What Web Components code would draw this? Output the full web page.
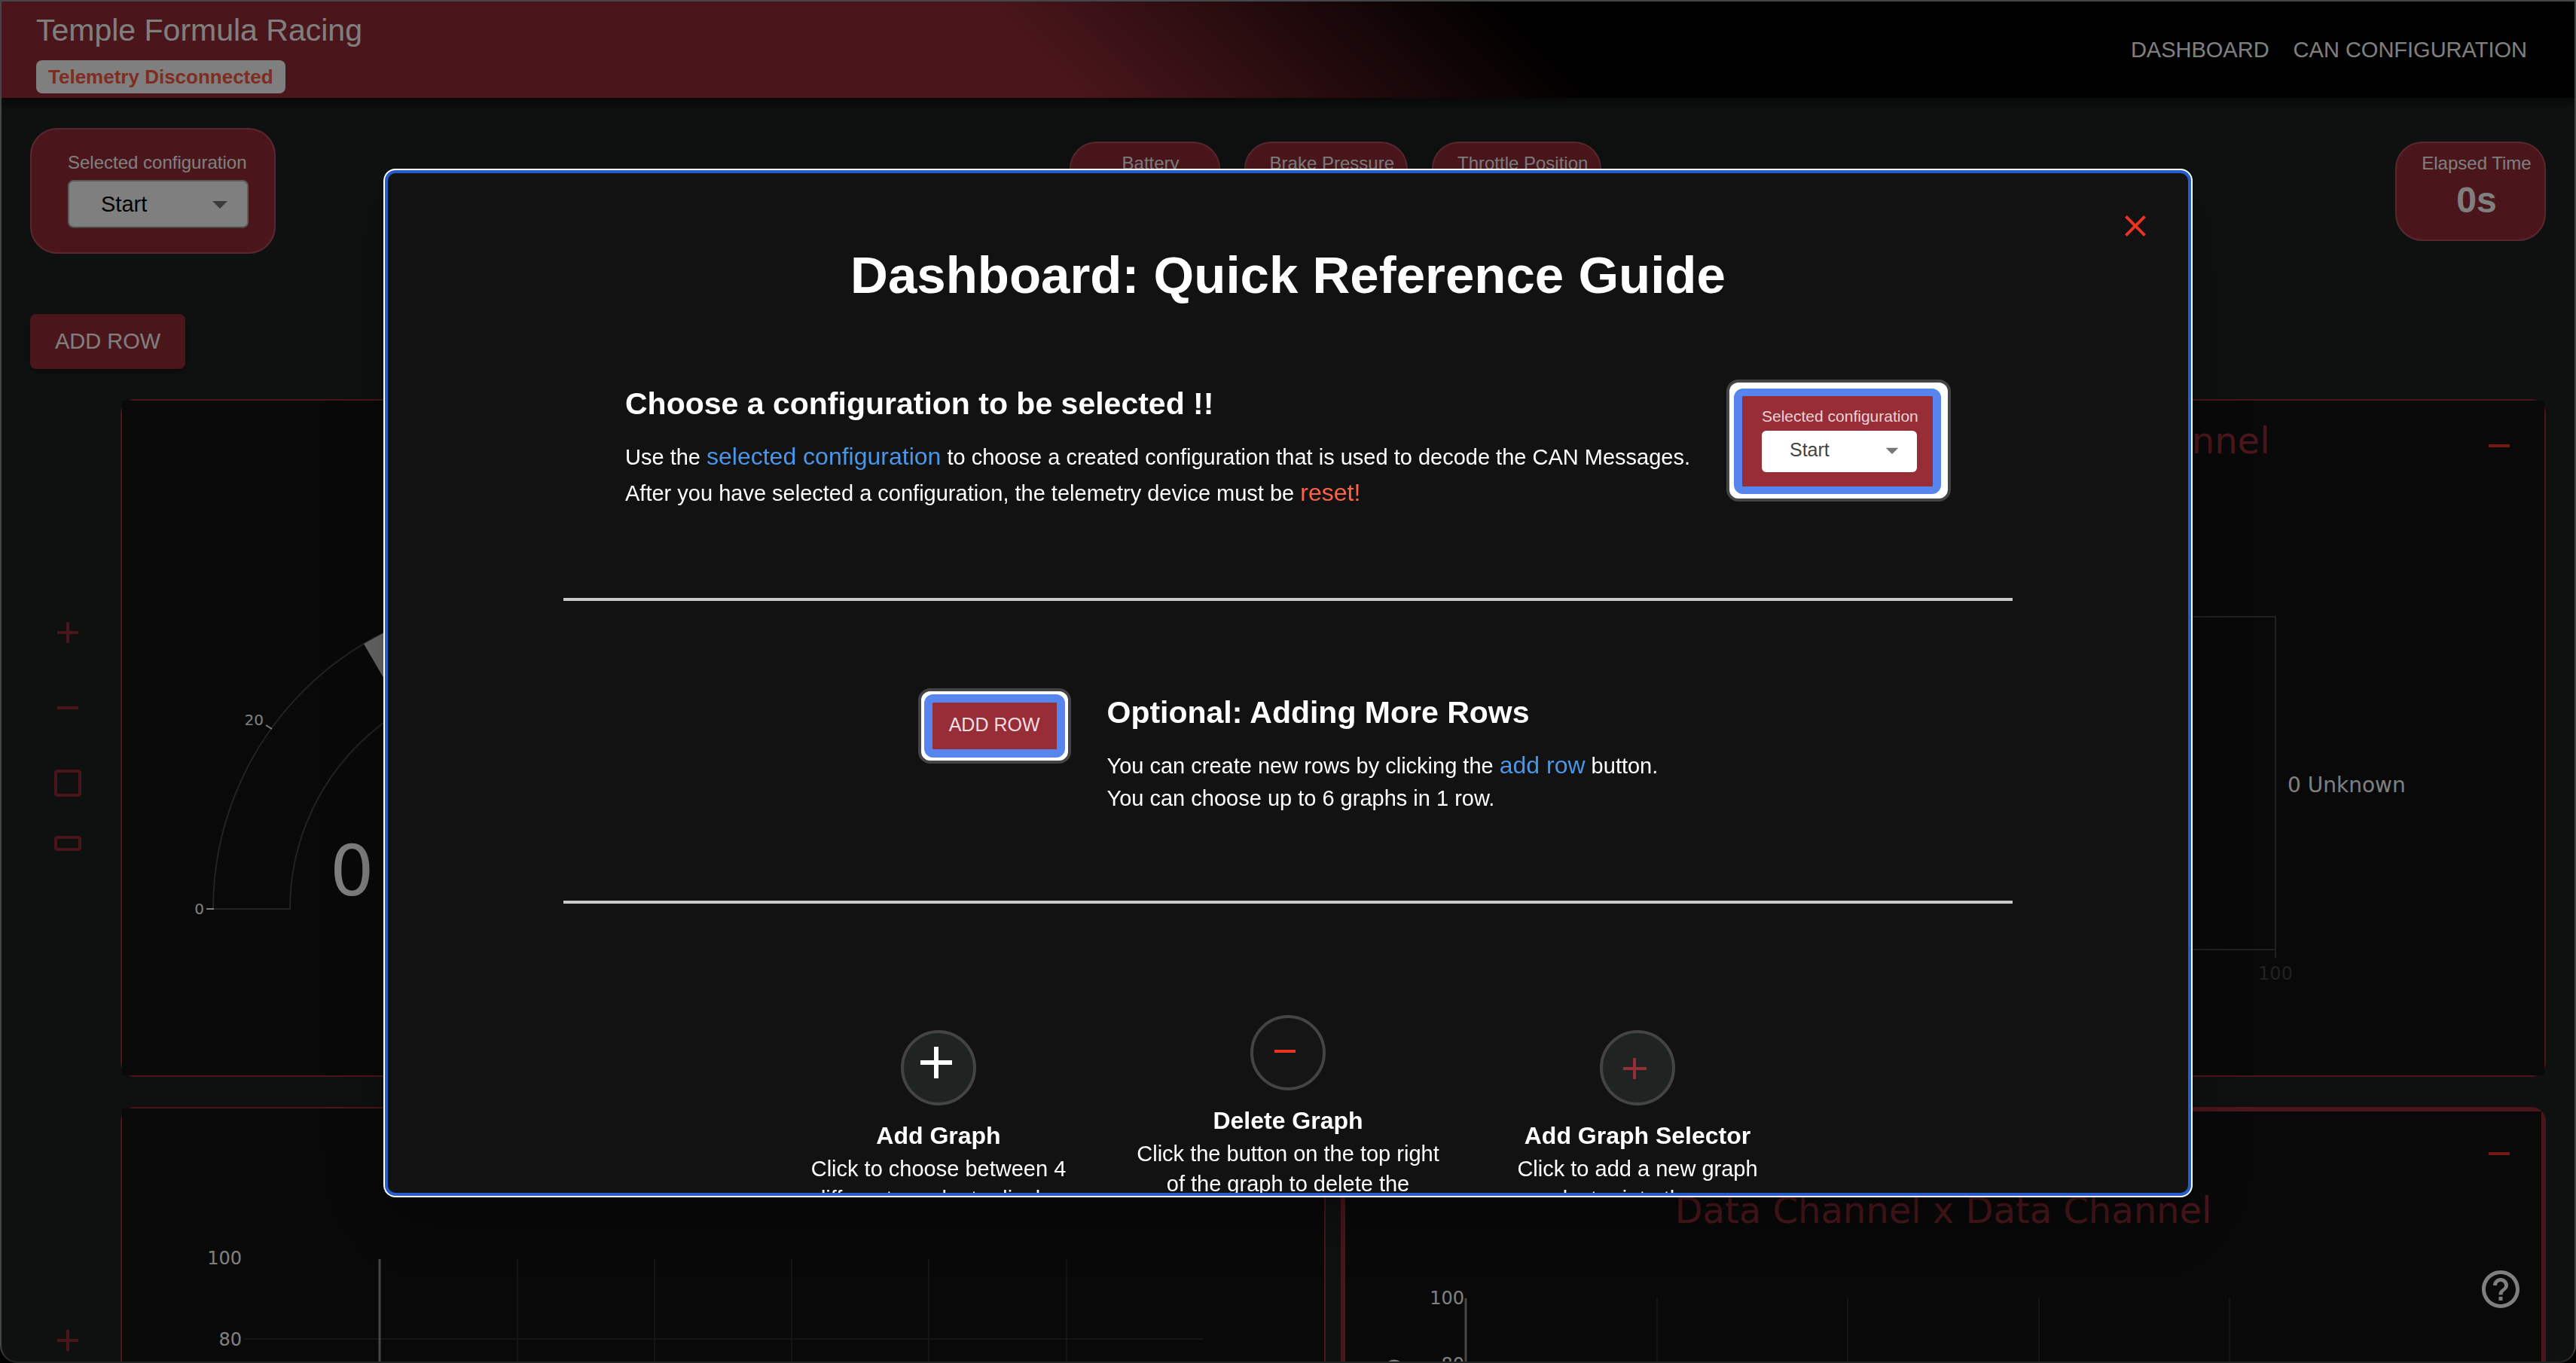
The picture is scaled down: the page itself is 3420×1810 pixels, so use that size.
<!DOCTYPE html>
<html lang="en">
<head>
<meta charset="utf-8">
<title>Temple Formula Racing</title>
<style>
  :root {
    --page: #1e2221;
    --brand: #962d37;
    --card: #121212;
    --danger: #ea3323;
    --accent: #4a96e8;
  }
  * { box-sizing: border-box; }
  html, body { margin: 0; height: 100%; overflow: hidden; background: #000; }
  body { font-family: "Liberation Sans", Arial, sans-serif; font-size: 29px; color: #fff; }
</style>
</head>
<body>
<tfr-app></tfr-app>

<script>
const define = (name, html) => {
  const template = document.createElement('template');
  template.innerHTML = '<style>*{box-sizing:border-box}</style>' + html;
  customElements.define(name, class extends HTMLElement {
    constructor() {
      super();
      this.attachShadow({ mode: 'open' }).append(template.content.cloneNode(true));
    }
  });
};

/* Application bar */
define('tfr-header', `
<style>
  :host { display: block; position: relative; z-index: 1; }
  header {
    display: flex; justify-content: space-between; align-items: center;
    min-height: 128px; padding: 6px 63px 6px 46px;
    background: linear-gradient(45deg, var(--brand) 40%, #000 60%);
    box-shadow: 0 4px 8px -2px rgba(0,0,0,.3), 0 8px 10px rgba(0,0,0,.25), 0 2px 20px rgba(0,0,0,.2);
  }
  .brand { display: flex; flex-direction: column; align-items: flex-start; gap: 8px; }
  h1 { margin: 0; font-size: 41px; line-height: 64px; font-weight: 400; }
  .status { padding: 0 16px; border-radius: 8px; background: #fff; color: #ff5a45; font-size: 26px; line-height: 44px; font-weight: 700; }
  nav { display: flex; gap: 32px; }
  a { color: #fff; text-decoration: none; font-size: 29px; line-height: 48px; }
</style>
<header>
  <div class="brand">
    <h1>Temple Formula Racing</h1>
    <div class="status">Telemetry Disconnected</div>
  </div>
  <nav><a href="#dashboard">DASHBOARD</a><a href="#can">CAN CONFIGURATION</a></nav>
</header>`);

/* Rounded red read-out card */
define('tfr-stat', `
<style>
  :host {
    display: flex; flex-direction: column; align-items: center; min-width: 200px;
    padding: 9px 16px 20px 32px; border: 2px solid #b2505f; border-radius: 36px; background: var(--brand);
  }
  .label { font-size: 24px; line-height: 35px; white-space: nowrap; }
  .value { font-size: 48px; line-height: 64px; font-weight: 700; }
</style>
<div class="label"><slot></slot></div>
<div class="value"><slot name="value"></slot></div>`);

define('tfr-config', `
<style>
  :host {
    display: block; padding: 26px 34px 32px 48px; border: 2px solid #b2505f; border-radius: 36px; background: var(--brand);
  }
  label { display: block; font-size: 24px; line-height: 35px; margin-bottom: 6px; white-space: nowrap; }
  .field { display: grid; align-items: center; width: 240px; }
  select, svg { grid-area: 1 / 1; }
  select {
    appearance: none; width: 100%; height: 64px; padding: 0 42px; border: 2px solid #b8b8b8; border-bottom-color: #999;
    border-radius: 8px; background: #fff; color: #000; font: 29px "Liberation Sans", Arial, sans-serif;
  }
  svg { justify-self: end; width: 48px; height: 48px; margin-right: 14px; pointer-events: none; fill: #757575; }
</style>
<label for="config">Selected configuration</label>
<div class="field">
  <select id="config"><option>Start</option></select>
  <svg viewBox="0 0 24 24"><path d="M7 10l5 5 5-5z"/></svg>
</div>`);

/* Row of graphs with its tool column */
define('tfr-row', `
<style>
  :host { display: flex; gap: 20px; min-height: 900px; }
  .tools { display: flex; flex-direction: column; justify-content: center; align-items: center; gap: 20px; width: 100px; flex: none; }
  .pair { display: flex; flex-direction: column; }
  button { display: grid; place-items: center; width: 80px; height: 80px; padding: 0; border: 0; background: none; color: var(--brand); }
  svg { width: 48px; height: 48px; fill: currentColor; }
  .graphs { display: grid; grid-auto-flow: column; grid-auto-columns: minmax(0, 1fr); flex: 1; gap: 20px; min-width: 0; }
</style>
<div class="tools">
  <button aria-label="Add graph"><svg viewBox="0 0 24 24"><path d="M19 13h-6v6h-2v-6H5v-2h6V5h2v6h6z"/></svg></button>
  <button aria-label="Remove row"><svg viewBox="0 0 24 24"><path d="M19 13H5v-2h14z"/></svg></button>
  <div class="pair">
    <button aria-label="Tall row"><svg viewBox="0 0 24 24"><path d="M19 3H5c-1.1 0-2 .9-2 2v14c0 1.1.9 2 2 2h14c1.1 0 2-.9 2-2V5c0-1.1-.9-2-2-2zm0 16H5V5h14z" fill-rule="evenodd"/></svg></button>
    <button aria-label="Short row"><svg viewBox="0 0 24 24"><path d="M19 7H5c-1.100 0-2 .9-2 2v6c0 1.100.9 2 2 2h14c1.100 0 2-.9 2-2V9c0-1.100-.9-2-2-2zm0 8H5V9h14z" fill-rule="evenodd"/></svg></button>
  </div>
</div>
<div class="graphs"><slot></slot></div>`);

define('tfr-graph', `
<style>
  :host { display: grid; border: 2px solid var(--brand); border-radius: 20px; font-family: "DejaVu Sans", Verdana, sans-serif; }
  :host([thick]) { border-width: 6px; }
  .plot, button { grid-area: 1 / 1; }
  .plot { background: var(--card); min-width: 0; }
  ::slotted(svg) { display: block; width: 100%; height: 100%; }
  button { justify-self: end; align-self: start; display: grid; place-items: center; width: 80px; height: 80px; margin: 20px 20px 0 0; padding: 0; border: 0; background: none; color: var(--danger); }
  :host([thick]) button { margin: 16px 16px 0 0; }
  button svg { width: 48px; height: 48px; fill: currentColor; }
</style>
<div class="plot"><slot></slot></div>
<button aria-label="Delete graph"><svg viewBox="0 0 24 24"><path d="M19 13H5v-2h14z"/></svg></button>`);

/* Framed sample of a control, used in the guide */
define('guide-sample', `
<style>
  :host { display: block; flex: none; border: 4px solid #444; border-radius: 16px; background: #fff; overflow: hidden; }
  .ring { border: solid #5585ed; border-radius: 12px; background: var(--brand); }
  :host([kind="config"]) { padding: 8px 9px 6px 6px; }
  :host([kind="config"]) .ring { border-width: 10px 11px; padding: 14px 21px 19px 26px; }
  :host([kind="row"]) { padding: 4px; }
  :host([kind="row"]) .ring { border-width: 11px; padding: 13px 22px 17px; }
</style>
<div class="ring"><slot></slot></div>`);

define('sample-config', `
<style>
  :host { display: block; width: 206px; }
  .label { font-size: 21px; line-height: 26px; color: #ecd2d6; white-space: nowrap; margin-bottom: 6px; }
  .box { display: flex; align-items: center; justify-content: space-between; height: 55px; padding: 0 13px 4px 37px; border-radius: 6px; background: #fff; color: #444; font-size: 25px; }
  svg { width: 40px; height: 40px; fill: #777; }
</style>
<div class="label">Selected configuration</div>
<div class="box">Start<svg viewBox="0 0 24 24"><path d="M7 10l5 5 5-5z"/></svg></div>`);

define('guide-section', `
<style>
  :host { display: flex; justify-content: center; align-items: flex-start; gap: 48px; padding: 116px 0; border-bottom: 4px solid #c9c9c9; }
  :host([first]) { padding-top: 94px; }
  h3 { margin: 0 0 14px; font-size: 41px; line-height: 64px; font-weight: 700; }
  .body { font-size: 29px; line-height: 40px; }
</style>
<slot name="before"></slot>
<div><h3><slot name="title"></slot></h3><div class="body"><slot></slot></div></div>
<slot name="after"></slot>`);

define('guide-tip', `
<style>
  :host { display: flex; flex-direction: column; align-items: center; width: 416px; text-align: center; }
  h4 { margin: 16px 0 0; font-size: 32px; line-height: 48px; font-weight: 700; }
  p { margin: 0; font-size: 29px; line-height: 40px; }
  ::slotted(svg) { width: 100px; height: 100px; }
</style>
<slot name="icon"></slot>
<h4><slot name="title"></slot></h4>
<p><slot></slot></p>`);

define('quick-guide', `
<style>
  :host { display: block; position: relative; width: 70vw; height: 75vh; border-radius: 12px; background: #121212;
    outline: 4px solid #265dc8; outline-offset: -2px;
    box-shadow: 0 0 0 4px #fff, 0 22px 30px -14px rgba(0,0,0,.2), 0 48px 76px 6px rgba(0,0,0,.14), 0 18px 92px 16px rgba(0,0,0,.12); }
  .scroll { height: 100%; overflow: hidden; padding: 93px 235px 0; }
  .close { position: absolute; top: 32px; right: 32px; display: grid; place-items: center; width: 80px; height: 80px; padding: 0; border: 0; background: none; }
  .close svg { width: 48px; height: 48px; fill: var(--danger); }
  h2 { margin: 0; font-size: 69px; line-height: 89px; font-weight: 700; text-align: center; }
  .line { display: block; }
  .hot, .warn { font-size: 32px; line-height: 48px; }
  .hot { color: var(--accent); }
  .warn { color: #ff6347; }
  .tips { display: flex; justify-content: center; align-items: center; gap: 48px; padding-top: 148px; }
  .addrow { font-size: 25px; line-height: 32px; color: #f2dde0; white-space: nowrap; }
</style>
<div class="scroll">
  <h2>Dashboard: Quick Reference Guide</h2>
  <guide-section first>
    <span slot="title">Choose a configuration to be selected !!</span>
    <span class="line">Use the <span class="hot">selected configuration</span> to choose a created configuration that is used to decode the CAN Messages.</span>
    <span class="line">After you have selected a configuration, the telemetry device must be <span class="warn">reset!</span></span>
    <guide-sample slot="after" kind="config"><sample-config></sample-config></guide-sample>
  </guide-section>
  <guide-section>
    <guide-sample slot="before" kind="row"><div class="addrow">ADD ROW</div></guide-sample>
    <span slot="title">Optional: Adding More Rows</span>
    <span class="line">You can create new rows by clicking the <span class="hot">add row</span> button.</span>
    <span class="line">You can choose up to 6 graphs in 1 row.</span>
  </guide-section>
  <div class="tips">
    <guide-tip>
      <svg slot="icon" viewBox="0 0 100 100"><circle cx="50" cy="50" r="48" fill="#1f2322" stroke="#444" stroke-width="4"/><path d="M26 43h42M47 22v42" stroke="#fff" stroke-width="6"/></svg>
      <span slot="title">Add Graph</span>Click to choose between 4 different graphs to display
    </guide-tip>
    <guide-tip>
      <svg slot="icon" viewBox="0 0 100 100"><circle cx="50" cy="50" r="48" fill="#151515" stroke="#444" stroke-width="4"/><path d="M32 48h28" stroke="#ea3323" stroke-width="4"/></svg>
      <span slot="title">Delete Graph</span>Click the button on the top right of the graph to delete the selected graph
    </guide-tip>
    <guide-tip>
      <svg slot="icon" viewBox="0 0 100 100"><circle cx="50" cy="50" r="48" fill="#1f2322" stroke="#444" stroke-width="4"/><path d="M31 51h31M46 37v28" stroke="#962d37" stroke-width="4"/></svg>
      <span slot="title">Add Graph Selector</span>Click to add a new graph selector into the row
    </guide-tip>
  </div>
</div>
<button class="close" aria-label="Close"><svg viewBox="0 0 24 24"><path d="M19 6.410L17.590 5 12 10.590 6.410 5 5 6.410 10.590 12 5 17.590 6.410 19 12 13.410 17.590 19 19 17.590 13.410 12z"/></svg></button>`);

define('tfr-app', `
<style>
  :host { display: block; height: 100vh; overflow: hidden; border: 2px solid #434747; border-radius: 0 0 24px 24px; background: var(--page); }
  main { padding: 40px 38px; }
  .top { display: flex; justify-content: space-between; align-items: center; }
  .stats { display: flex; gap: 32px; }
  .add { display: block; margin: 80px 0 40px; padding: 0 33px; height: 73px; border: 0; border-radius: 8px; background: var(--brand); color: #fff; font: 29px "Liberation Sans", Arial, sans-serif;
    box-shadow: 0 6px 2px -4px rgba(0,0,0,.2), 0 4px 4px rgba(0,0,0,.14), 0 2px 10px rgba(0,0,0,.12); }
  .rows { display: grid; gap: 40px; }
  svg text { fill: #fff; font-size: 24px; }
  svg .title { fill: #962d37; font-size: 48px; }
  .grid { stroke: #2a2a2a; stroke-width: 2; fill: none; }
  .help { position: fixed; right: 70px; bottom: 68px; width: 60px; height: 60px; padding: 0; border: 0; background: none; }
  .help svg { display: block; fill: #fff; }
  .backdrop { position: fixed; inset: 2px 2px 0; z-index: 2; display: flex; align-items: center; justify-content: center; padding-top: 2px; background: rgba(0,0,0,.5); border-radius: 0 0 22px 22px; }
</style>
<tfr-header></tfr-header>
<main>
  <div class="top">
    <tfr-config></tfr-config>
    <div class="stats">
      <tfr-stat>Battery<span slot="value">0%</span></tfr-stat>
      <tfr-stat>Brake Pressure<span slot="value">0</span></tfr-stat>
      <tfr-stat>Throttle Position<span slot="value">0</span></tfr-stat>
    </div>
    <tfr-stat>Elapsed Time<span slot="value">0s</span></tfr-stat>
  </div>
  <button class="add">ADD ROW</button>
  <div class="rows">
    <tfr-row>
      <tfr-graph>
        <svg viewBox="0 0 1056 896">
          <path d="M121 675A410 410 0 0 1 941 675H839A308 308 0 0 0 223 675Z" class="grid" style="stroke:#444"/>
          <path d="M321 323A408 408 0 0 1 939 675H839A308 308 0 0 0 372 411Z" fill="#d0d0d0"/>
          <path d="M112 675h10M191 431l8 5" stroke="#fff" stroke-width="2"/>
          <text x="109" y="682" text-anchor="end" style="font-size:20px">0</text>
          <text x="188" y="431" text-anchor="end" style="font-size:20px">20</text>
          <text x="276" y="657" style="font-size:92px">0</text>
        </svg>
      </tfr-graph>
      <tfr-graph></tfr-graph>
      <tfr-graph>
        <svg viewBox="0 0 1056 896">
          <text class="title" x="528" y="70" text-anchor="middle">Data Channel</text>
          <path d="M100 287H699M100 729H699M699 286V740" class="grid" style="stroke:#404040"/>
          <text x="715" y="520" style="font-size:28px">0 Unknown</text>
          <text x="699" y="769" text-anchor="middle" style="fill:#444">100</text>
        </svg>
      </tfr-graph>
    </tfr-row>
    <tfr-row>
      <tfr-graph>
        <svg viewBox="0 0 1596 896">
          <path d="M161 306H1436M525 200V800M707 200V800M889 200V800M1071 200V800M1254 200V800" class="grid"/>
          <path d="M342 200V800" stroke="#8e8e8e" stroke-width="3"/>
          <text x="159" y="207" text-anchor="end">100</text>
          <text x="159" y="315" text-anchor="end">80</text>
        </svg>
      </tfr-graph>
      <tfr-graph thick>
        <svg viewBox="0 0 1588 888">
          <text class="title" x="794" y="148" text-anchor="middle">Data Channel x Data Channel</text>
          <path d="M414 248V800M667 248V800M921 248V800M1174 248V800" class="grid"/>
          <path d="M160 248V800" stroke="#8e8e8e" stroke-width="3"/>
          <text x="158" y="256" text-anchor="end">100</text>
          <text x="158" y="344" text-anchor="end">80</text>
          <circle cx="65" cy="343" r="12" fill="none" stroke="#fff" stroke-width="3"/>
        </svg>
      </tfr-graph>
    </tfr-row>
  </div>
</main>
<button class="help" aria-label="Help"><svg viewBox="0 0 24 24"><path d="M11 18h2v-2h-2v2zm1-16C6.480 2 2 6.480 2 12s4.480 10 10 10 10-4.480 10-10S17.520 2 12 2zm0 18c-4.410 0-8-3.590-8-8s3.590-8 8-8 8 3.590 8 8-3.590 8-8 8zm0-14c-2.210 0-4 1.790-4 4h2c0-1.100.9-2 2-2s2 .9 2 2c0 2-3 1.750-3 5h2c0-2.250 3-2.500 3-5 0-2.210-1.790-4-4-4z"/></svg></button>
<div class="backdrop"><quick-guide role="dialog" aria-label="Quick reference guide"></quick-guide></div>`);
</script>
</body>
</html>
